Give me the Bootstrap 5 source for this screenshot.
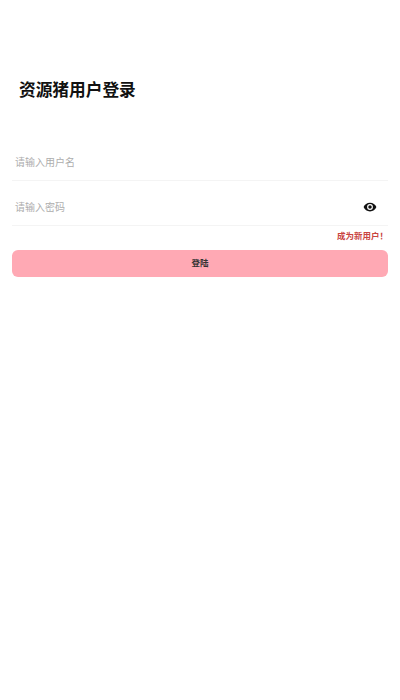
<!DOCTYPE html>
<html lang="zh"><head><meta charset="utf-8">
<link href="https://cdn.jsdelivr.net/npm/bootstrap@5.3.0/dist/css/bootstrap.min.css" rel="stylesheet">
<style>
body{font-family:"Liberation Sans","Noto Sans CJK SC",sans-serif;background:#fff;width:400px;height:700px;overflow:hidden}
.login-wrap{padding:79px 12px 0}
.login-title{font-size:16.7px;font-weight:700;line-height:23px;color:#111;margin:0 0 34px 7px}
.field-row{height:45px;border-bottom:1px solid #f4f4f4;padding:8px 11px 0 3px;font-size:10px;color:#adadad}
.new-user{font-size:8.5px;font-weight:700;color:#c9443f;line-height:20px;margin-bottom:4px}
.login-btn{height:27px;background:#ffa9b4;border-radius:6px;font-size:8.5px;font-weight:700;color:#333}
</style></head><body>
<div class="login-wrap">
<h1 class="login-title">资源猪用户登录</h1>
<div class="field-row d-flex align-items-center">请输入用户名</div>
<div class="field-row d-flex align-items-center justify-content-between">请输入密码
<svg width="14" height="14" viewBox="0 0 24 24"><path fill="#111" d="M12 4.500C7 4.500 2.700 7.600 1 12c1.700 4.400 6 7.500 11 7.500s9.300-3.100 11-7.500c-1.700-4.400-6-7.500-11-7.500zM12 17a5 5 0 1 1 0-10 5 5 0 0 1 0 10zm0-8a3 3 0 1 0 0 6 3 3 0 0 0 0-6z"/></svg></div>
<div class="new-user text-end">成为新用户！</div>
<div class="login-btn d-flex align-items-center justify-content-center">登陆</div>
</div>
<script src="https://cdn.jsdelivr.net/npm/bootstrap@5.3.0/dist/js/bootstrap.bundle.min.js"></script>
</body></html>
